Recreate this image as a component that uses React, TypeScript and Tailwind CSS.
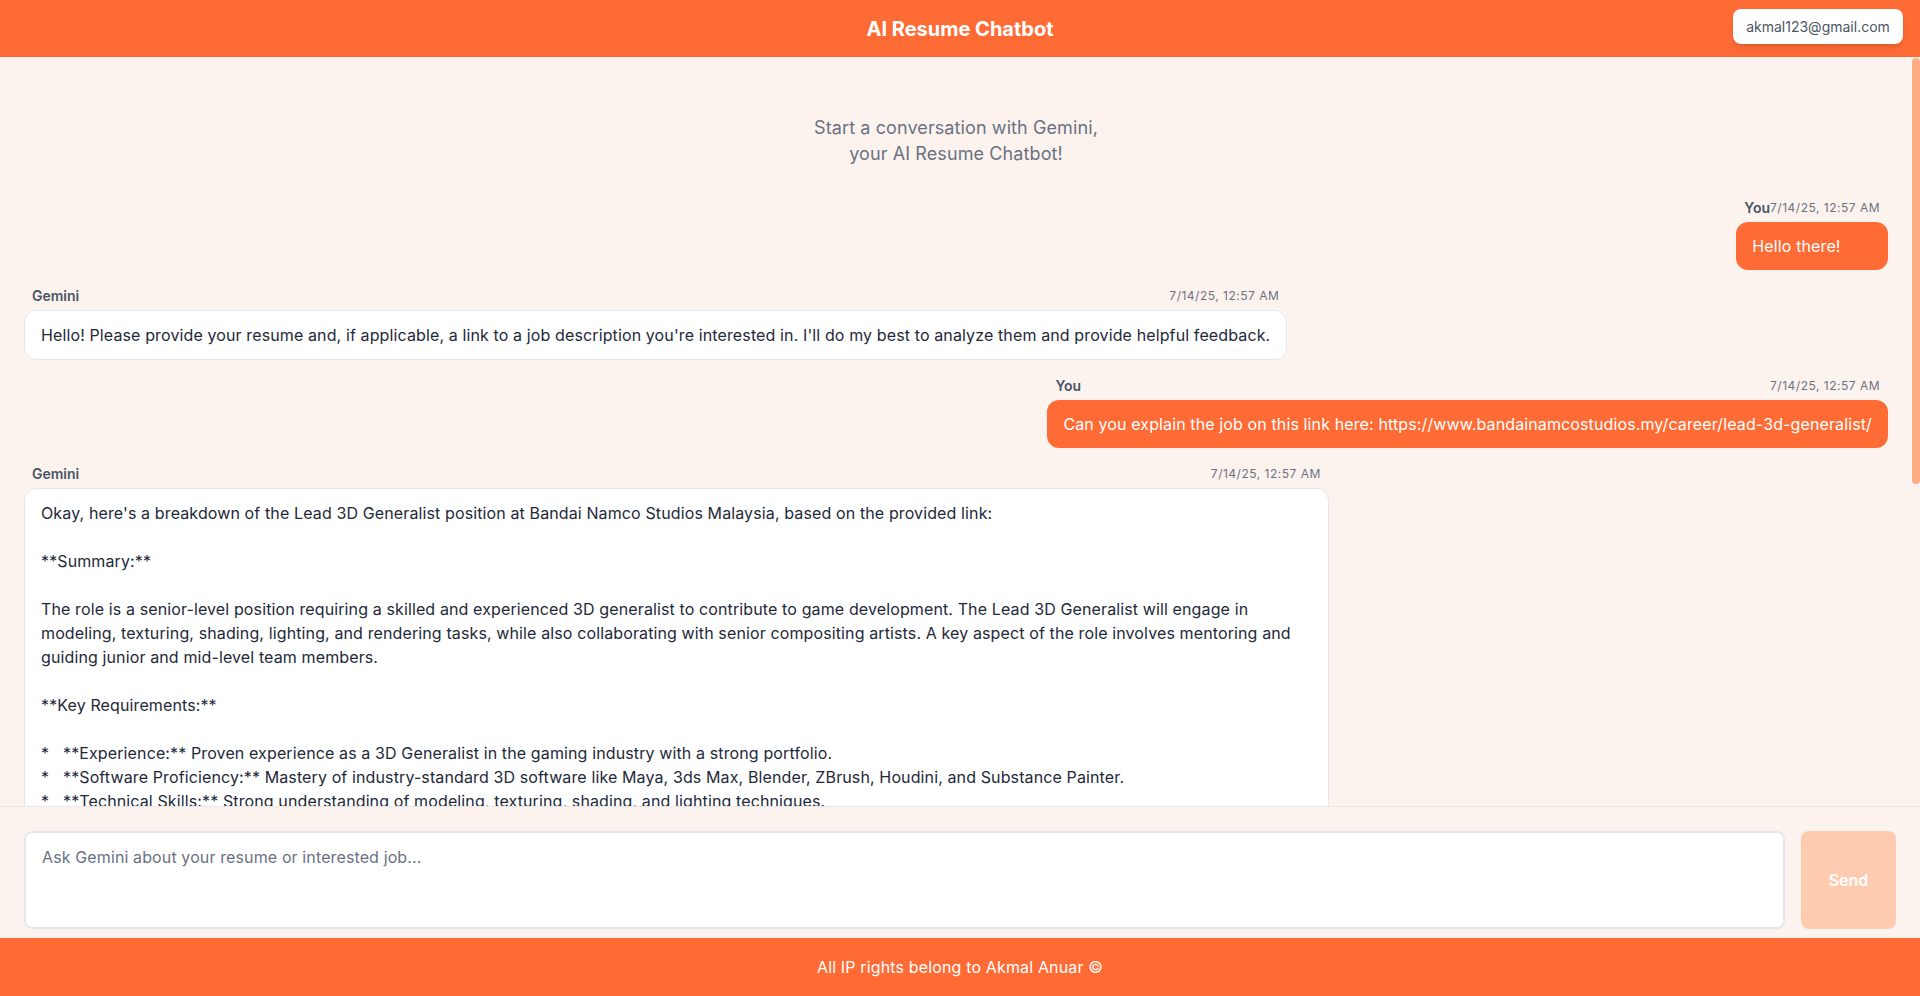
import React, { useState } from 'react';

interface Message {
  id: number;
  sender: 'user' | 'gemini';
  text: string;
  timestamp: string;
}

const breakdown = `Okay, here's a breakdown of the Lead 3D Generalist position at Bandai Namco Studios Malaysia, based on the provided link:

**Summary:**

The role is a senior-level position requiring a skilled and experienced 3D generalist to contribute to game development. The Lead 3D Generalist will engage in modeling, texturing, shading, lighting, and rendering tasks, while also collaborating with senior compositing artists. A key aspect of the role involves mentoring and guiding junior and mid-level team members.

**Key Requirements:**

*   **Experience:** Proven experience as a 3D Generalist in the gaming industry with a strong portfolio.
*   **Software Proficiency:** Mastery of industry-standard 3D software like Maya, 3ds Max, Blender, ZBrush, Houdini, and Substance Painter.
*   **Technical Skills:** Strong understanding of modeling, texturing, shading, and lighting techniques.
*   **Compositing Knowledge:** Familiarity with compositing workflows and tools such as Nuke.
*   **Leadership:** Experience mentoring and guiding junior and mid-level artists.
*   **Communication:** Excellent communication and teamwork skills.

**Key Responsibilities:**

*   Create high-quality 3D assets, including modeling, texturing, shading, and lighting.
*   Collaborate with senior compositing artists to achieve the desired visual quality.
*   Mentor and guide junior and mid-level team members.
*   Maintain consistency with the art direction and technical requirements of the project.

**In summary:**

This is a leadership role for an experienced 3D generalist who can deliver high-quality work across the full 3D pipeline while helping the rest of the team grow.

If you share your resume, I can compare your experience against these requirements and suggest improvements.`;

const initialMessages: Message[] = [
  { id: 1, sender: 'user', text: 'Hello there!', timestamp: '7/14/25, 12:57 AM' },
  {
    id: 2,
    sender: 'gemini',
    text: "Hello! Please provide your resume and, if applicable, a link to a job description you're interested in. I'll do my best to analyze them and provide helpful feedback.",
    timestamp: '7/14/25, 12:57 AM',
  },
  {
    id: 3,
    sender: 'user',
    text: 'Can you explain the job on this link here: https://www.bandainamcostudios.my/career/lead-3d-generalist/',
    timestamp: '7/14/25, 12:57 AM',
  },
  { id: 4, sender: 'gemini', text: breakdown, timestamp: '7/14/25, 12:57 AM' },
];

const ChatMessage: React.FC<{ message: Message }> = ({ message }) => {
  const isUser = message.sender === 'user';
  return (
    <div className={isUser ? 'flex justify-end' : 'flex justify-start'}>
      <div className="max-w-[70%]">
        <div className="mb-1 flex items-center justify-between px-2 leading-5">
          <span className="text-sm font-semibold text-gray-600">{isUser ? 'You' : 'Gemini'}</span>
          <span className="text-xs tracking-[0.5px] text-gray-500">{message.timestamp}</span>
        </div>
        {isUser ? (
          <div className="whitespace-pre-wrap rounded-xl bg-[#ff6b35] px-4 py-3 text-base leading-6 tracking-[0.12px] text-white">
            {message.text}
          </div>
        ) : (
          <div className="whitespace-pre-wrap rounded-xl border border-gray-200 bg-white px-4 py-3 text-base leading-6 tracking-[0.12px] text-gray-800">
            {message.text}
          </div>
        )}
      </div>
    </div>
  );
};

const App: React.FC = () => {
  const [input, setInput] = useState('');
  const messages = initialMessages;

  return (
    <div
      className="flex h-screen flex-col bg-[#fdf3ee]"
      style={{ fontFamily: 'Inter, "Noto Sans", sans-serif' }}
    >
      <header className="relative flex h-[57px] shrink-0 items-center justify-center bg-[#ff6b35]">
        <h1 className="text-xl font-bold text-white">AI Resume Chatbot</h1>
        <div className="absolute right-[17px] top-[9px] flex h-[35px] w-[170px] items-center justify-center rounded-lg bg-white text-sm text-gray-600 shadow-md">
          akmal123@gmail.com
        </div>
      </header>

      <div className="relative min-h-0 flex-1">
        <main className="h-full overflow-y-auto py-6 pl-6 pr-8">
          <p className="pb-[31px] pt-[34px] text-center text-lg leading-[26px] tracking-[0.1px] text-gray-500">
            Start a conversation with Gemini,
            <br />
            your AI Resume Chatbot!
          </p>
          <div className="space-y-4">
            {messages.map(m => (
              <ChatMessage key={m.id} message={m} />
            ))}
          </div>
        </main>
        {/* scrollbar thumb */}
        <div className="pointer-events-none absolute right-0 top-px h-[426px] w-2 rounded-full bg-[#ffab85]" />
      </div>

      <div className="flex shrink-0 gap-4 border-t border-gray-200 px-6 pb-[9px] pt-6">
        <textarea
          value={input}
          onChange={e => setInput(e.target.value)}
          placeholder="Ask Gemini about your resume or interested job..."
          className="h-[98px] flex-1 resize-none rounded-lg border-2 border-gray-200 bg-white px-4 py-3 text-base leading-6 tracking-[0.12px] text-gray-800 outline-none placeholder:text-gray-500"
        />
        <button
          disabled={!input.trim()}
          className="h-[98px] w-[95px] rounded-lg bg-[#ffcbb0] text-base font-semibold text-white"
        >
          Send
        </button>
      </div>

      <footer className="flex h-[58px] shrink-0 items-center justify-center bg-[#ff6b35] text-base tracking-[0.15px] text-white">
        All IP rights belong to Akmal Anuar ©
      </footer>
    </div>
  );
};

export default App;
